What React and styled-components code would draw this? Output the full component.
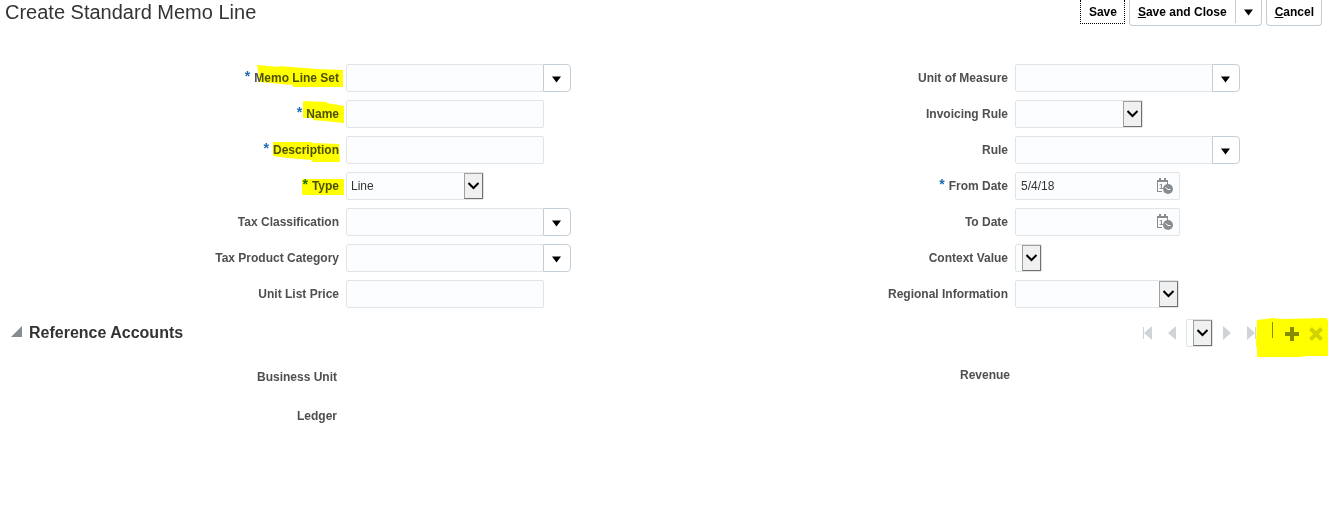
import React from "react"
import styled, { createGlobalStyle } from "styled-components"

const GlobalStyle = createGlobalStyle`
  * {
    box-sizing: border-box;
  }
  body {
    margin: 0;
    background-color: #ffffff;
    color: #333333;
    font-family: "Liberation Sans", Arial, sans-serif;
    font-size: 12px;
  }
  button, input, select {
    font-family: inherit;
    font-size: 12px;
  }
`

const leftFields = [
  { id: "memoLineSet", label: "Memo Line Set", kind: "combo", required: true, mark: { left: 3, width: 87, points: "0,0 22,2 22,1 60,4 86,5 86,22 36,22 36,20 3,17" } },
  { id: "name", label: "Name", kind: "text", required: true, mark: { left: -3, width: 41, points: "0,0 24,1 24,2 41,5 41,22 22,20 10,19 10,17 0,17" } },
  { id: "description", label: "Description", kind: "text", required: true, mark: { left: 0, width: 67, points: "0,5 39,5 39,6 66,7 66,10 67,25 39,25 39,23 14,21 0,19" } },
  { id: "type", label: "Type", kind: "select", width: 138, value: "Line", required: true, mark: { left: -10, width: 42, points: "0,6 42,6 42,22 0,22" } },
  { id: "taxClassification", label: "Tax Classification", kind: "combo" },
  { id: "taxProductCategory", label: "Tax Product Category", kind: "combo" },
  { id: "unitListPrice", label: "Unit List Price", kind: "text" },
]

const rightFields = [
  { id: "unitOfMeasure", label: "Unit of Measure", kind: "combo" },
  { id: "invoicingRule", label: "Invoicing Rule", kind: "select", width: 128 },
  { id: "rule", label: "Rule", kind: "combo" },
  { id: "fromDate", label: "From Date", kind: "date", value: "5/4/18", required: true },
  { id: "toDate", label: "To Date", kind: "date" },
  { id: "contextValue", label: "Context Value", kind: "select", width: 27 },
  { id: "regionalInformation", label: "Regional Information", kind: "select", width: 164 },
]

const DownArrow = () => (
  <svg width="10" height="7" viewBox="0 0 10 7" aria-hidden="true">
    <path d="M0 0.5h9L4.5 6.5z" fill="#000000" />
  </svg>
)

const CalendarIcon = () => (
  <svg width="17" height="17" viewBox="0 0 17 17" aria-hidden="true">
    <path d="M0 2h11v4h-1V4H1v9h4v1H0z" fill="#868c90" />
    <path d="M2 0h2v3H2zM7 0h2v3H7z" fill="#868c90" />
    <text x="2" y="11" fontSize="8" fontWeight="bold" fill="#868c90">1</text>
    <circle cx="11" cy="11" r="5" fill="#868c90" />
    <path d="M8.5 9.5l2.5 2h2.5" fill="none" stroke="#ffffff" />
  </svg>
)

const Select = ({ id, width, value, label }) => (
  <SelectBox $width={width}>
    <NativeSelect id={id} aria-label={label} defaultValue={value || ""}>
      <option value={value || ""}>{value || ""}</option>
    </NativeSelect>
    <SelectArrow>
      <svg width="12" height="8" viewBox="0 0 12 8" aria-hidden="true">
        <path d="M0.5 1L5.5 6L10.5 1" fill="none" stroke="#000000" strokeWidth="2" />
      </svg>
    </SelectArrow>
  </SelectBox>
)

const Control = ({ field }) => {
  if (field.kind === "select") {
    return <Select id={field.id} width={field.width} value={field.value} />
  }
  if (field.kind === "combo") {
    return (
      <Combo>
        <TextInput id={field.id} type="text" />
        <ComboButton type="button" aria-label={`Search ${field.label}`}>
          <DownArrow />
        </ComboButton>
      </Combo>
    )
  }
  if (field.kind === "date") {
    return (
      <DateBox>
        <DateInput id={field.id} type="text" defaultValue={field.value} />
        <DateButton type="button" aria-label={`Select ${field.label}`}>
          <CalendarIcon />
        </DateButton>
      </DateBox>
    )
  }
  return <TextInput id={field.id} type="text" />
}

const Field = ({ field }) => (
  <FieldRow>
    <LabelCell>
      {field.required && <Required>*</Required>}
      <Label htmlFor={field.id}>
        {field.label}
        {field.mark && (
          <Marker $left={field.mark.left} width={field.mark.width} height="28" aria-hidden="true">
            <polygon points={field.mark.points} fill="#ffff00" />
          </Marker>
        )}
      </Label>
    </LabelCell>
    <Control field={field} />
  </FieldRow>
)

const App = () => (
  <>
    <GlobalStyle />
    <Header>
      <Title>Create Standard Memo Line</Title>
      <Actions>
        <SaveButton type="button">Save</SaveButton>
        <SplitButton>
          <SplitMain type="button"><u>S</u>ave and Close</SplitMain>
          <SplitMore type="button" aria-label="More save options">
            <DownArrow />
          </SplitMore>
        </SplitButton>
        <CancelButton type="button"><u>C</u>ancel</CancelButton>
      </Actions>
    </Header>
    <Form>
      <Column>
        {leftFields.map(field => <Field key={field.id} field={field} />)}
      </Column>
      <Column>
        {rightFields.map(field => <Field key={field.id} field={field} />)}
      </Column>
    </Form>
    <SectionHeader>
      <Disclosure type="button" aria-label="Collapse Reference Accounts">
        <svg width="11" height="11" viewBox="0 0 11 11" aria-hidden="true">
          <path d="M11 0v11H0z" fill="#868c90" />
        </svg>
      </Disclosure>
      <SectionTitle>Reference Accounts</SectionTitle>
      <Pager>
        <PagerGroup>
          <IconButton type="button" aria-label="First" disabled>
            <svg width="9" height="14" viewBox="0 0 9 14">
              <path d="M0 1h1v12H0zM9 0v14L1 7z" fill="#d0d3d6" />
            </svg>
          </IconButton>
          <IconButton type="button" aria-label="Previous" disabled>
            <svg width="8" height="14" viewBox="0 0 8 14">
              <path d="M8 0v14L0 7z" fill="#d0d3d6" />
            </svg>
          </IconButton>
        </PagerGroup>
        <Select width={27} label="Row" />
        <PagerGroup>
          <IconButton type="button" aria-label="Next" disabled>
            <svg width="8" height="14" viewBox="0 0 8 14">
              <path d="M0 0v14l8-7z" fill="#d0d3d6" />
            </svg>
          </IconButton>
          <IconButton type="button" aria-label="Last" disabled>
            <svg width="9" height="14" viewBox="0 0 9 14">
              <path d="M8 1h1v12H8zM0 0v14l8-7z" fill="#d0d3d6" />
            </svg>
          </IconButton>
        </PagerGroup>
      </Pager>
      <RowTools>
        <Divider />
        <IconButton type="button" aria-label="Add Row">
          <svg width="14" height="14" viewBox="0 0 14 14">
            <path d="M5 0h4v5h5v4H9v5H5V9H0V5h5z" fill="#868c90" />
          </svg>
        </IconButton>
        <IconButton type="button" aria-label="Delete Row" disabled>
          <svg width="14" height="14" viewBox="0 0 14 14">
            <path d="M1.5 1.5l11 11M12.5 1.5l-11 11" stroke="#d0d3d6" strokeWidth="4" />
          </svg>
        </IconButton>
        <ToolsMarker width="72" height="39" viewBox="0 0 72 39" aria-hidden="true">
          <polygon points="1,2 18,0 25,1 70,0 72,2 72,38 50,38 45,39 1,39 1,30 0,28" fill="#ffff00" />
        </ToolsMarker>
      </RowTools>
    </SectionHeader>
    <Accounts>
      <AccountColumn $top={2}>
        <AccountLabel>Business Unit</AccountLabel>
        <AccountLabel>Ledger</AccountLabel>
      </AccountColumn>
      <AccountColumn $top={0}>
        <AccountLabel>Revenue</AccountLabel>
      </AccountColumn>
    </Accounts>
  </>
)

const Header = styled.header`
  display: flex;
  justify-content: space-between;
  align-items: flex-start;
  padding: 0 14px 38px 5px;
`

const Title = styled.h1`
  margin: 0;
  font-size: 20px;
  font-weight: normal;
  line-height: 24px;
`

const Actions = styled.div`
  display: flex;
  gap: 4px;
`

const Button = styled.button`
  height: 26px;
  padding: 0 7px 2px 8px;
  border: 1px solid #c4ced7;
  border-top: none;
  border-radius: 0 0 4px 4px;
  background-color: #ffffff;
  color: #000000;
  font-weight: bold;
`

const SaveButton = styled(Button)`
  height: 24px;
  padding-bottom: 0;
  border: 1px dotted #000000;
  border-top: none;
  border-radius: 0;
`

const SplitButton = styled.div`
  display: flex;
  height: 26px;
  border: 1px solid #c4ced7;
  border-top: none;
  border-radius: 0 0 4px 4px;
`

const SplitMain = styled(Button)`
  height: 23px;
  padding: 0 8px;
  border: none;
`

const SplitMore = styled(SplitMain)`
  padding-right: 7px;
  border-left: 1px solid #c4ced7;
  border-radius: 0;
`

const CancelButton = styled(Button)``

const Form = styled.form`
  display: grid;
  grid-template-columns: 1fr 1fr;
  column-gap: 2px;
`

const Column = styled.div`
  display: flex;
  flex-direction: column;
  gap: 8px;
`

const FieldRow = styled.div`
  display: flex;
  gap: 7px;
  height: 28px;
`

const LabelCell = styled.div`
  display: flex;
  flex: 0 0 339px;
  justify-content: flex-end;
  gap: 4px;
  line-height: 28px;
`

const Label = styled.label`
  position: relative;
  color: #4f4f4f;
  font-weight: bold;
`

const Required = styled.span`
  color: #1c6cb5;
  font-size: 14px;
  font-weight: bold;
  line-height: 24px;
`

const Marker = styled.svg`
  position: absolute;
  top: 1px;
  left: ${props => props.$left}px;
  mix-blend-mode: multiply;
  pointer-events: none;
`

const TextInput = styled.input`
  width: 198px;
  height: 28px;
  padding: 0 4px;
  border: 1px solid #dfe4e7;
  border-radius: 2px;
  background-color: #fcfdfe;
  color: #333333;
`

const Combo = styled.div`
  display: flex;
`

const ComboButton = styled.button`
  display: flex;
  justify-content: center;
  align-items: center;
  width: 28px;
  height: 28px;
  margin-left: -1px;
  padding: 2px 0 0;
  border: 1px solid #c4ced7;
  border-radius: 0 4px 4px 0;
  background-color: #ffffff;
`

const SelectBox = styled.div`
  position: relative;
  width: ${props => props.$width}px;
  height: 28px;
`

const NativeSelect = styled.select`
  appearance: none;
  width: 100%;
  height: 28px;
  padding: 0 0 0 4px;
  border: 1px solid #dfe4e7;
  border-radius: 2px;
  background-color: #fcfdfe;
  color: #333333;
`

const SelectArrow = styled.span`
  position: absolute;
  top: 1px;
  right: 1px;
  bottom: 1px;
  display: flex;
  justify-content: center;
  align-items: center;
  width: 19px;
  border: 1px solid #707070;
  border-top-color: #a0a0a0;
  border-left-color: #a0a0a0;
  background-color: #f0f0f0;
  pointer-events: none;
`

const DateBox = styled.div`
  display: flex;
  align-items: center;
  width: 165px;
  border: 1px solid #dfe4e7;
  border-radius: 2px;
  background-color: #fcfdfe;
`

const DateInput = styled.input`
  flex: 1;
  min-width: 0;
  height: 26px;
  padding: 0 5px;
  border: none;
  background: none;
  color: #333333;
`

const IconButton = styled.button`
  display: flex;
  padding: 0;
  border: none;
  background: none;
`

const DateButton = styled(IconButton)`
  margin-right: 5px;
`

const SectionHeader = styled.section`
  display: flex;
  align-items: center;
  height: 39px;
  margin-top: 10px;
  padding: 0 8px 0 11px;
`

const Disclosure = styled(IconButton)`
  margin: 0 7px 12px 0;
`

const SectionTitle = styled.h2`
  margin: 0 auto 10px 0;
  font-size: 16px;
  line-height: 20px;
`

const Pager = styled.div`
  display: flex;
  align-items: center;
  gap: 10px;
  margin-bottom: 9px;
`

const PagerGroup = styled.div`
  display: flex;
  gap: 16px;
`

const RowTools = styled.div`
  position: relative;
  display: flex;
  align-items: center;
  width: 72px;
  height: 39px;
  padding: 0 5px 7px 16px;
`

const Divider = styled.span`
  width: 1px;
  height: 16px;
  margin: 0 12px 8px 0;
  background-color: #868c90;

  & + button {
    margin-right: 10px;
  }
`

const ToolsMarker = styled.svg`
  position: absolute;
  top: 0;
  left: 0;
  mix-blend-mode: multiply;
  pointer-events: none;
`

const Accounts = styled.div`
  display: grid;
  grid-template-columns: 1fr 1fr;
  column-gap: 10px;
  padding-top: 8px;
`

const AccountColumn = styled.div`
  display: flex;
  flex-direction: column;
  gap: 19px;
  padding-top: ${props => props.$top}px;
`

const AccountLabel = styled.div`
  width: 337px;
  color: #4f4f4f;
  font-weight: bold;
  line-height: 20px;
  text-align: right;
`

export default App
